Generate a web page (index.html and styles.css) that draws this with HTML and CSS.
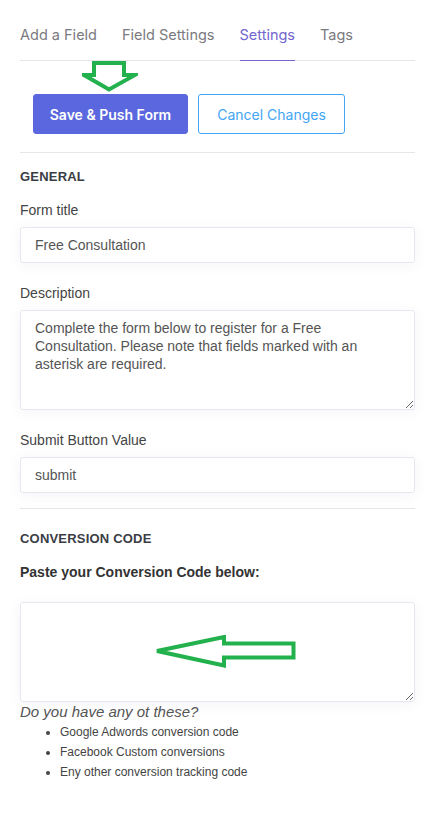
FILE: index.html
```html
<!DOCTYPE html>
<html lang="en">
<head>
<meta charset="utf-8">
<title>Settings</title>
<link rel="stylesheet" href="styles.css">
</head>
<body>
<div class="page">
  <nav class="tabs">
    <a class="tab">Add a Field</a>
    <a class="tab">Field Settings</a>
    <a class="tab active">Settings</a>
    <a class="tab">Tags</a>
  </nav>

  <div class="actions">
    <svg class="arrow-down" width="56" height="31" viewBox="0 0 56 31">
      <polygon points="12,2 42,2 42,14 53,14 27,28.5 2,14 12,14" fill="none" stroke="#22b14c" stroke-width="4" stroke-linejoin="miter"/>
    </svg>
    <button class="btn btn-primary">Save &amp; Push Form</button>
    <button class="btn btn-outline">Cancel Changes</button>
  </div>

  <section class="section general">
    <h3 class="section-title">GENERAL</h3>
    <label class="label">Form title</label>
    <input class="field" type="text" value="Free Consultation">
    <label class="label">Description</label>
    <textarea class="field area">Complete the form below to register for a Free Consultation. Please note that fields marked with an asterisk are required.</textarea>
    <label class="label">Submit Button Value</label>
    <input class="field" type="text" value="submit">
  </section>

  <section class="section conversion">
    <h3 class="section-title">CONVERSION CODE</h3>
    <p class="label strong">Paste your Conversion Code below:</p>
    <div class="area-wrap">
      <textarea class="field area"></textarea>
      <svg class="arrow-left" width="141" height="33" viewBox="0 0 141 33">
        <polygon points="2,16 69,2 69,8.5 138.5,8.5 138.5,22.5 69,22.5 69,30.5" fill="none" stroke="#22b14c" stroke-width="4" stroke-linejoin="miter"/>
      </svg>
    </div>
    <p class="hint">Do you have any ot these?</p>
    <ul class="list">
      <li>Google Adwords conversion code</li>
      <li>Facebook Custom conversions</li>
      <li>Eny other conversion tracking code</li>
    </ul>
  </section>
</div>
</body>
</html>
```

FILE: styles.css
```css
* { box-sizing: border-box; }
html, body { margin: 0; padding: 0; background: #fff; }
body { font-family: "Liberation Sans", Arial, sans-serif; color: #444; }

.page { padding: 0 20px; }

.tabs {
  display: flex;
  gap: 25px;
  border-bottom: 1px solid #e6e6e9;
  height: 61px;
}
.tab {
  font-family: Inter, "Noto Sans", sans-serif;
  font-size: 14.5px;
  line-height: 22px;
  color: #7a7a80;
  padding-top: 24px;
}
.tab.active {
  color: #7266d0;
  border-bottom: 1px solid #7266d0;
  height: 61px;
}

.actions {
  position: relative;
  display: flex;
  gap: 10px;
  padding: 33px 0 18px 13px;
  border-bottom: 1px solid #e6e6e9;
}
.arrow-down {
  position: absolute;
  left: 62px;
  top: 0;
}
.btn {
  font-family: Inter, "Noto Sans", sans-serif;
  font-size: 14px;
  font-weight: 500;
  height: 40px;
  border-radius: 3px;
  padding: 0 14px;
  cursor: pointer;
}
.btn-primary {
  background: #5a67de;
  border: 1px solid #5a67de;
  color: #fff;
  width: 155px;
  font-weight: 600;
}
.btn-outline {
  background: #fff;
  border: 1px solid #42a5f5;
  color: #42a5f5;
  width: 147px;
  font-weight: 400;
}

.section { display: flex; flex-direction: column; }
.general { padding: 15px 0 15px; border-bottom: 1px solid #e6e6e9; }
.conversion { padding-top: 21px; }

.section-title {
  margin: 0;
  font-size: 13px;
  line-height: 18px;
  font-weight: 700;
  color: #3a3d44;
  letter-spacing: 0.2px;
}
.label {
  display: block;
  margin: 14px 0 7px;
  font-size: 14px;
  line-height: 20px;
  color: #444;
}
.general .label ~ .label { margin-top: 20px; }
.label.strong { font-weight: 700; color: #333; margin-bottom: 20px; }

.field {
  display: block;
  width: 100%;
  height: 36px;
  border: 1px solid #e7e8ef;
  border-radius: 3px;
  background: #fff;
  box-shadow: 0 2px 14px rgba(60, 70, 140, 0.06);
  padding: 0 14px;
  font-family: "Liberation Sans", Arial, sans-serif;
  font-size: 14px;
  color: #555;
  outline: none;
}
.area {
  height: 100px;
  padding: 8px 14px;
  line-height: 18px;
  resize: vertical;
}

.area-wrap { position: relative; }
.arrow-left {
  position: absolute;
  left: 135px;
  top: 33px;
  pointer-events: none;
}

.hint {
  margin: 0;
  font-size: 15px;
  line-height: 20px;
  font-style: italic;
  color: #555;
}
.list {
  margin: 0;
  padding-left: 40px;
  font-size: 12px;
  line-height: 20px;
  color: #444;
}
```
